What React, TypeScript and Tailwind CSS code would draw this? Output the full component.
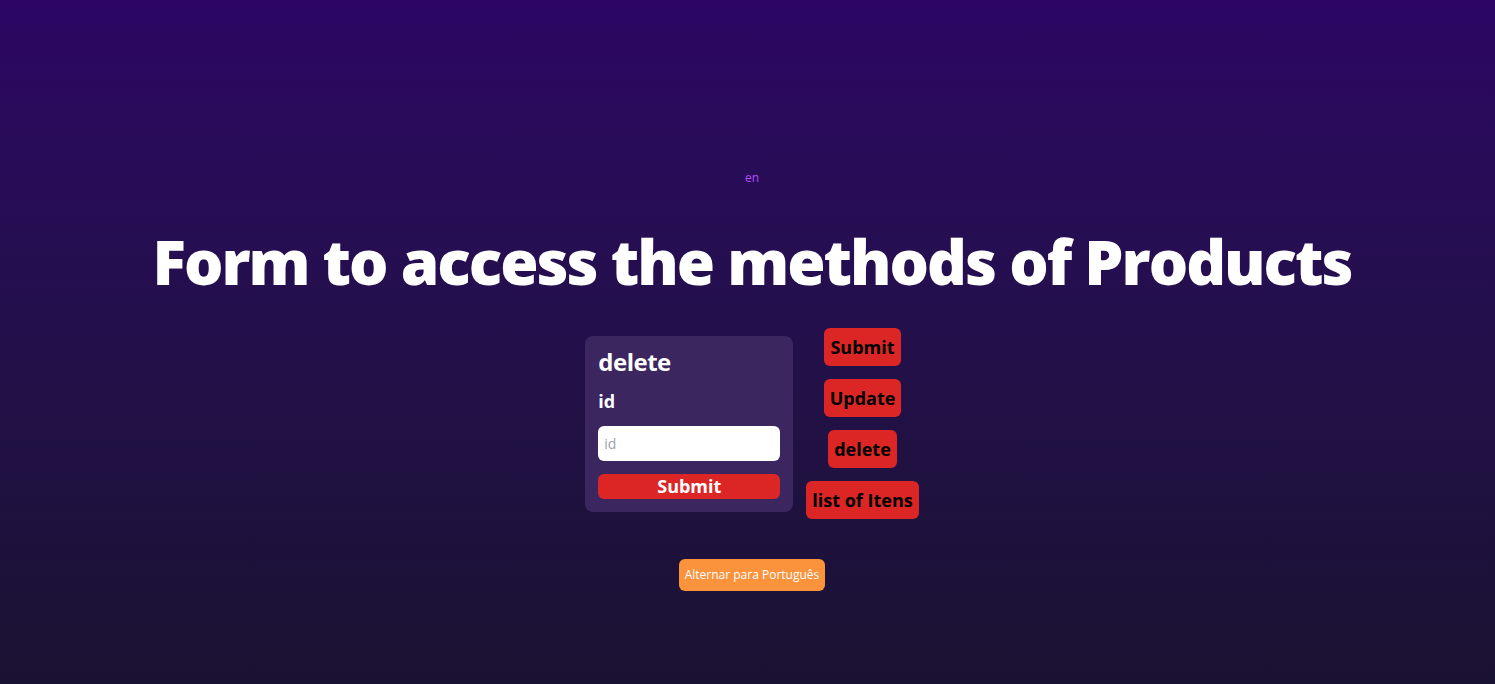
const font = { fontFamily: '"Open Sans", "Noto Sans", sans-serif' };

const SideButton = ({ text }: { text: string }) => (
    <button className="bg-[#dc2626] text-black font-bold text-[18px] leading-[26px] px-[6px] py-[6px] rounded-md">
        {text}
    </button>
);

export default function App() {
    return (
        <div style={font} className="min-h-[684px] w-full bg-gradient-to-b from-[#2d0664] to-[#1a1232] flex flex-col items-center pl-[9px]">
            <p className="mt-[170px] text-[12px] leading-[16px] text-[#b44cff]">en</p>
            <h1 className="mt-[39px] text-[62px] leading-[72px] font-extrabold text-white tracking-[-2px]">
                Form to access the methods of Products
            </h1>
            <div className="flex items-center gap-[13px] mt-[31px]">
                <form className="w-[208px] bg-[#3b2660] rounded-lg p-[13px] flex flex-col">
                    <h2 className="text-[24px] leading-[26px] font-bold text-white tracking-[-0.5px]">delete</h2>
                    <label className="mt-[14px] text-[18px] leading-[24px] font-bold text-white">id</label>
                    <input
                        placeholder="id"
                        className="mt-[13px] h-[35px] w-full bg-white rounded-md px-[6px] text-[14px] text-black placeholder:text-[#9aa3b0] outline-none"
                    />
                    <button className="mt-[13px] h-[25px] w-full bg-[#dc2626] rounded-md text-white font-bold text-[18px] leading-[25px]">
                        Submit
                    </button>
                </form>
                <div className="flex flex-col items-center gap-[13px]">
                    <SideButton text="Submit" />
                    <SideButton text="Update" />
                    <SideButton text="delete" />
                    <SideButton text="list of Itens" />
                </div>
            </div>
            <button className="mt-[40px] h-[32px] px-[6px] bg-[#fb923c] rounded-md text-white text-[12px]">
                Alternar para Português
            </button>
        </div>
    );
}
